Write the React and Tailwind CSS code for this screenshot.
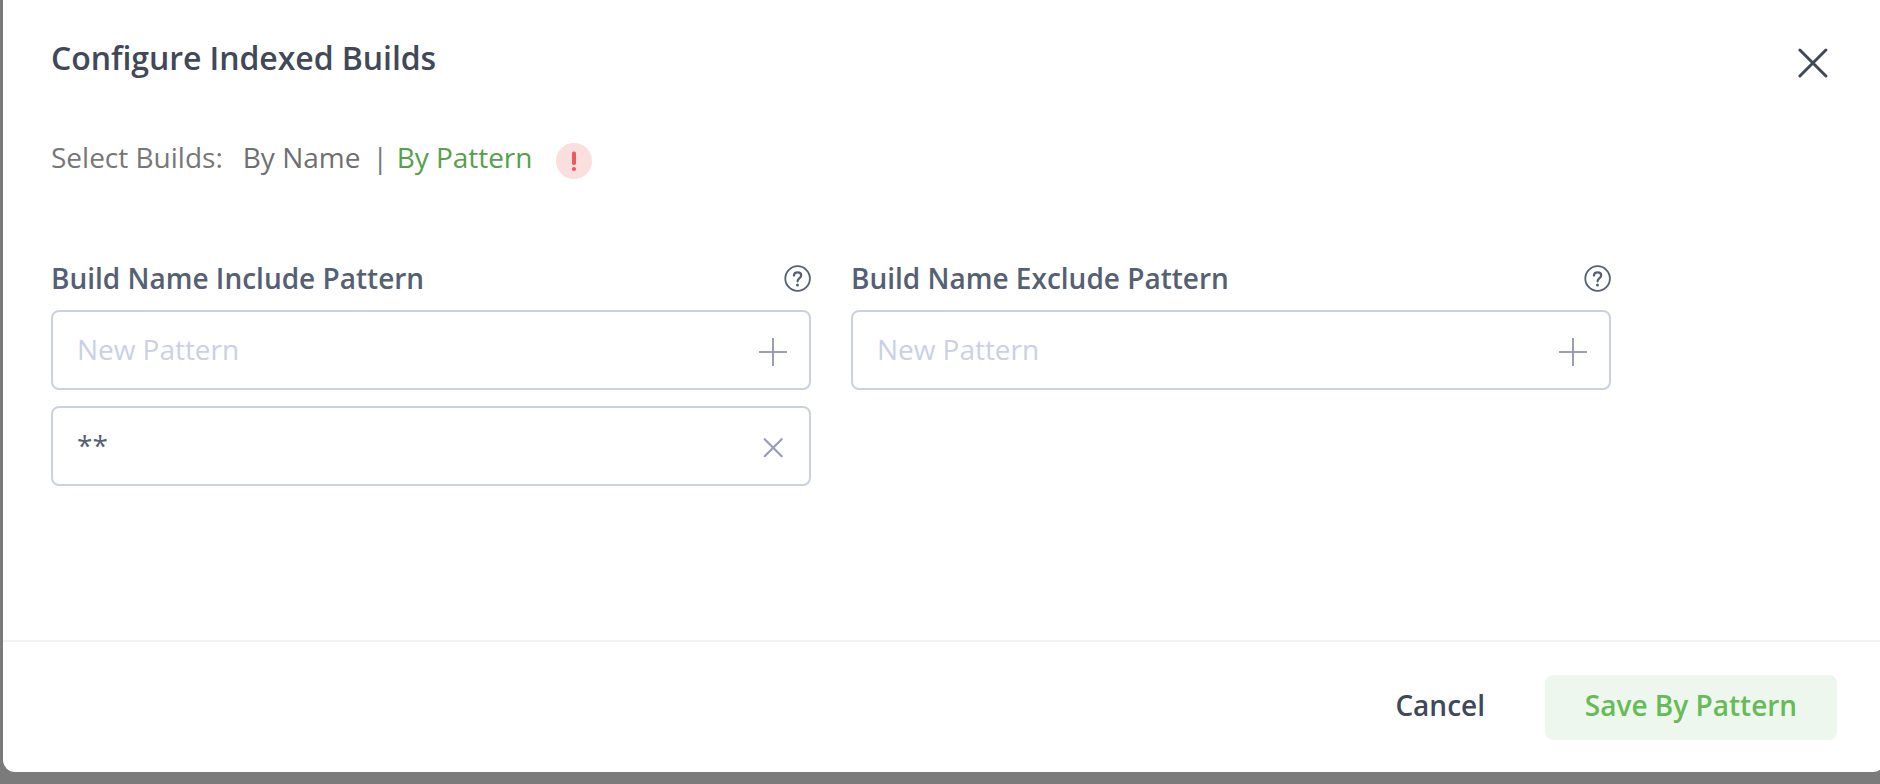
import React from 'react';

function HelpIcon() {
  return (
    <svg className="size-7" viewBox="0 0 28 28" fill="none" stroke="#556072" strokeLinecap="round">
      <circle cx="14.6" cy="14.5" r="12.3" strokeWidth="1.8" />
      <path d="M10.9 11.6C11 9.4 12.5 8.3 14.6 8.3s3.6 1.2 3.6 3.1c0 2.6-3.6 2.9-3.6 5.9" strokeWidth="2.2" />
      <circle cx="14.5" cy="20.9" r="1.5" fill="#556072" stroke="none" />
    </svg>
  );
}

function PlusIcon() {
  return (
    <svg className="size-7" viewBox="0 0 28 28" fill="none" stroke="#9a9cb8" strokeWidth="2">
      <path d="M14 0v28M0 14h28" />
    </svg>
  );
}

function RemoveIcon() {
  return (
    <svg className="size-7" viewBox="0 0 28 28" fill="none" stroke="#9a9cb8" strokeWidth="2.2" strokeLinecap="round">
      <path d="M5.7 5.2l17 17M22.7 5.2l-17 17" />
    </svg>
  );
}

function Box({ children }) {
  return (
    <div className="flex h-20 items-center justify-between rounded-lg border-2 border-[#cbd0e4] pr-[22px] pl-6">
      {children}
    </div>
  );
}

function PatternColumn({ label, patterns }) {
  return (
    <section className="flex w-[760px] flex-col">
      <div className="flex h-10 items-center justify-between">
        <h2 className="text-[28px] leading-10 font-semibold text-[#556072]">{label}</h2>
        <HelpIcon />
      </div>
      <div className="mt-3 flex flex-col gap-4">
        <Box>
          <span className="pb-0.5 text-[28px] leading-10 tracking-[-0.04px] text-[#cbd0e4]">New Pattern</span>
          <span className="pt-1"><PlusIcon /></span>
        </Box>
        {patterns.map((pattern) => (
          <Box key={pattern}>
            <span className="pb-0.5 text-[28px] leading-10 text-[#556072]">{pattern}</span>
            <span className="pt-1"><RemoveIcon /></span>
          </Box>
        ))}
      </div>
    </section>
  );
}

export default function App() {
  return (
    <div className="h-[784px] w-[1880px] overflow-hidden bg-[#7b7b7b] pl-[3px] font-['Open_Sans',sans-serif]">
      <div className="flex h-[772px] w-[1882px] flex-col rounded-b-xl bg-white">
        <header className="flex items-start justify-between pt-[38px] pr-[57px] pl-12">
          <h1 className="text-[32px] leading-10 font-semibold tracking-[-0.07px] text-[#414857]">Configure Indexed Builds</h1>
          <svg className="mt-2.5 size-[30px]" viewBox="0 0 30 30" fill="none" stroke="#414857" strokeWidth="3" strokeLinecap="round">
            <path d="M1.9 2l26 26M27.9 2l-26 26" />
          </svg>
        </header>
        <div className="mt-[59px] flex h-10 items-center pl-12 text-[28px] leading-10 text-[#777777]">
          <span>Select Builds:</span>
          <span className="ml-5 text-[#6f6f6f]">By Name</span>
          <span className="ml-3">|</span>
          <span className="ml-[9px] tracking-[-0.06px] text-[#55a04b]">By Pattern</span>
          <svg className="mt-2 ml-6 size-9" viewBox="0 0 36 36">
            <circle cx="18" cy="18" r="18" fill="#fbdede" />
            <rect x="16" y="8.5" width="4" height="13.5" rx="1.8" fill="#eb5a5e" />
            <circle cx="18" cy="26" r="2.1" fill="#eb5a5e" />
          </svg>
        </div>
        <main className="mt-[81px] flex flex-1 gap-10 pl-12">
          <PatternColumn label="Build Name Include Pattern" patterns={['**']} />
          <PatternColumn label="Build Name Exclude Pattern" patterns={[]} />
        </main>
        <footer className="flex h-[132px] items-start justify-end border-t-2 border-[#f2f2f2] pt-[33px] pr-12 text-[28px] font-semibold">
          <button className="mr-[60px] h-[65px] pb-1 leading-[61px] text-[#414857]">Cancel</button>
          <button className="h-[65px] w-[292px] rounded-lg bg-[#edf7ee] pb-1 leading-[61px] text-[#67bb57]">Save By Pattern</button>
        </footer>
      </div>
    </div>
  );
}
